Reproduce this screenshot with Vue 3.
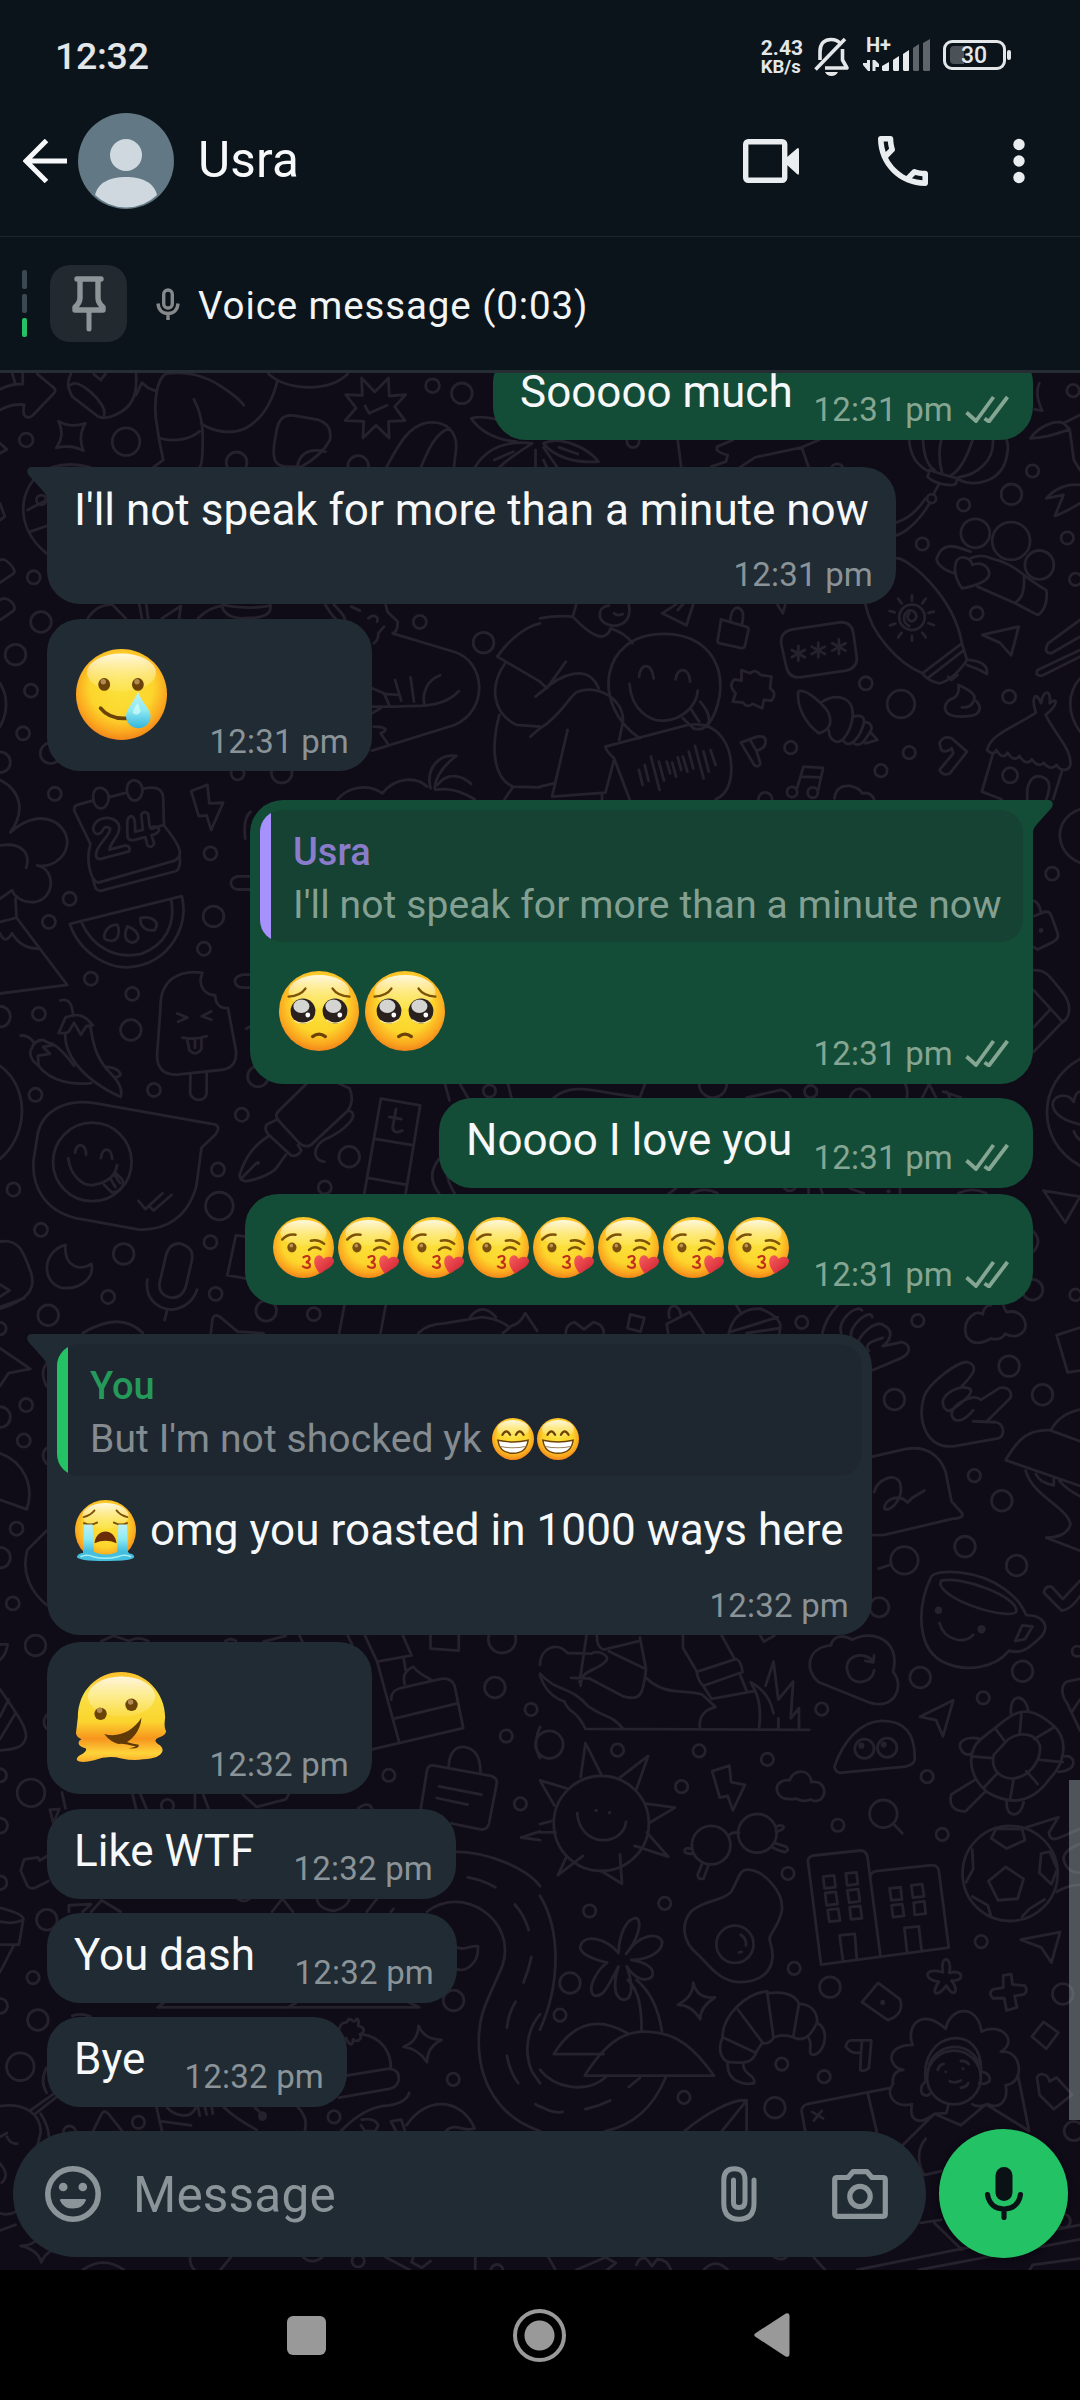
<script setup>
// Wallpaper tiles: origin and scale of each tile, rings [cx, cy, r], dots [cx, cy, r] and line art
const tiles = [
  {
    x: 0, y: 360, sx: 0.3444, sy: 0.3333,
    rings: [[76,240,20],[366,245,40],[687,307,30],[1256,77,20],[1341,100,30],[1040,318,30],[98,652,19],[119,786,30],[45,884,30],[90,992,19],[67,1120,19],[1219,786,19],[1404,848,30],[690,1240,19],[818,1238,30],[120,420,14],[0,1207,30],[147,1180,30]],
    dots: [],
    d: 'M0 150C20 138 45 132 70 134L68 150C66 172 84 178 96 165L158 98C162 92 160 86 155 82L108 42M0 88C20 76 40 72 66 72V42M36 42L44 70M206 42C190 70 200 90 210 110L285 170C300 176 320 172 334 165C380 145 400 110 395 42M205 75C220 60 245 80 262 95C290 120 308 150 302 165M272 42L292 60L306 42M395 105L412 68L430 84L450 92M480 42C455 60 448 120 452 170L462 240L474 300L445 322M480 42C540 30 600 50 640 78C670 98 698 120 708 136M563 118C590 170 590 220 588 270C588 300 586 310 580 322M462 234C500 246 545 242 580 214M584 190C620 216 670 224 710 206C760 180 790 130 806 60M780 42C830 90 950 100 1010 42M170 184Q205 205 248 190Q225 230 242 272Q205 252 163 264Q190 225 170 184ZM1050 54L1088 96L1128 54L1130 108L1178 104L1146 140L1176 182L1128 184L1130 234L1092 196L1054 234L1056 184L1002 182L1034 144L1004 104L1052 106ZM1060 138L1072 160L1124 136M800 230C806 180 820 160 860 168L925 180C955 190 962 215 958 240C940 275 910 300 875 320H830C800 318 786 300 800 230ZM862 322C870 285 890 262 945 275M1122 322C1150 270 1180 200 1240 188C1300 180 1325 220 1325 260L1318 322M1222 322C1240 280 1260 220 1305 205M1368 175C1400 165 1460 175 1510 212M1370 178C1400 220 1450 240 1500 245M1380 320C1410 270 1460 240 1545 250M1435 300L1490 275M1545 250C1500 280 1470 300 1450 322M1555 270V322M135 325C50 380 40 500 135 580M80 450L135 420M88 515L135 498M150 322Q205 305 262 322M0 600C15 590 50 630 40 640L0 668M0 720C20 705 50 735 40 752L0 780M0 250L20 268L0 280M0 430L14 470L0 480M255 775C275 745 295 735 325 733L365 775M405 735L412 775M425 735L430 775M470 775L525 738L520 775M575 775C600 750 625 740 645 738M645 738C650 770 690 778 720 774C760 775 790 765 785 735M645 735Q715 750 785 737M945 735C960 760 970 775 975 776M970 735C990 755 1000 770 1002 778M1020 740L1045 752M1070 775C1085 760 1100 770 1095 785M1120 735L1125 755L1155 785Q1155 815 1140 820L1320 876C1410 905 1420 1050 1320 1095L1080 1172M1085 850Q1100 840 1098 820L1115 800M1080 985L1115 1000L1130 1035M1147 960L1165 1022M1192 952L1202 1025M1278 946C1240 960 1225 1000 1232 1032M1115 1002L1155 1005M1080 1040H1150C1200 1035 1280 1050 1332 994M1080 1060L1105 1045M1085 1100C1120 1100 1130 1110 1105 1120L1125 1150M1568 790C1520 800 1470 850 1444 890L1568 965M1465 912C1420 980 1430 1060 1500 1095L1568 1100M1450 1065C1420 1180 1440 1260 1490 1280L1568 1282M1465 1318L1490 1280M980 1318C1010 1280 1070 1270 1110 1300C1150 1250 1210 1250 1240 1280M1250 1285C1235 1220 1280 1180 1325 1188C1290 1215 1265 1250 1262 1285M1270 1275C1300 1235 1340 1245 1368 1272M1265 1290C1310 1280 1350 1300 1378 1318M0 970C25 1010 22 1060 0 1100M1555 1010L1568 998M1540 1130L1568 1105'
  },
  {
    x: 540, y: 360, sx: 0.3444, sy: 0.3333,
    rings: [[1548,92,18],[1430,333,18],[1369,403,30],[1230,435,18],[1110,552,18],[1531,534,18],[1264,520,42],[1368,543,55],[1450,615,42],[1555,658,18],[1268,760,19],[1048,1032,40],[946,970,19],[1362,1010,19],[728,1163,18],[1072,1178,18],[990,1232,18],[1137,416,13],[270,244,18],[863,330,18],[1365,1246,22],[654,1318,20],[732,1296,15],[792,1298,15],[1080,772,37]],
    dots: [],
    d: 'M1072 240C1075 290 1100 320 1130 335L1125 350C1150 375 1200 380 1208 370L1212 355C1250 385 1340 370 1355 290Q1362 260 1355 240M1112 240C1115 300 1130 320 1145 330M1165 240C1155 280 1160 310 1168 342M1256 240C1240 290 1220 330 1195 345M1315 240C1320 300 1270 345 1215 352M1130 330Q1170 345 1212 355M1157 375L1142 403M1132 428C1110 470 1070 515 1035 526M1120 415C1090 460 1060 480 1035 487M1424 235C1450 195 1500 180 1520 190L1568 165M1424 235C1460 235 1490 225 1538 208L1520 190M1538 208L1550 300L1568 330M1470 415C1500 380 1540 370 1568 375M1470 415L1520 405L1495 468C1530 455 1550 440 1568 430M1205 640C1170 630 1150 610 1152 595C1170 540 1210 560 1250 575M1250 595Q1280 580 1310 595C1380 610 1400 650 1470 690C1475 720 1465 755 1445 765L1380 730L1270 680M1225 685C1195 640 1200 590 1230 592C1250 595 1255 610 1255 615C1290 600 1310 630 1302 650C1290 670 1250 680 1225 685ZM1405 650Q1410 710 1380 728M1035 595C1060 590 1200 700 1225 850L1110 940C1040 910 960 820 945 733M1225 850L1240 900Q1200 960 1160 970Q1130 965 1110 940M1232 870L1125 955M1245 900C1290 905 1300 920 1298 942Q1270 925 1240 915M1185 950L1195 960L1212 945M1072 760C1060 775 1075 790 1088 780C1100 765 1085 748 1070 752C1050 765 1055 790 1072 798M1080 706V722M1080 828V842M1015 753L1030 757M1143 755L1128 759M1016 796L1032 791M1144 796L1128 790M1040 716L1050 730M1120 716L1110 730M1040 832L1050 818M1120 832L1110 818M1284 825L1390 800L1368 886L1335 848ZM1568 780L1475 850Q1460 880 1485 880L1568 830M1568 870L1445 930Q1435 950 1460 946L1568 890M1215 975Q1270 1000 1260 1018C1290 1040 1275 1065 1250 1068C1200 1075 1175 1065 1176 1040Q1180 1020 1205 1012Q1218 1000 1215 975ZM1225 1042Q1250 1045 1258 1025M1440 1058C1380 1100 1310 1120 1298 1170C1310 1185 1322 1180 1325 1170C1335 1190 1350 1195 1358 1178C1370 1200 1385 1200 1392 1188C1405 1210 1420 1212 1428 1198C1440 1215 1455 1220 1462 1208C1475 1225 1490 1228 1500 1215C1510 1235 1535 1235 1540 1215C1545 1170 1500 1130 1468 1065M1440 1058C1425 1010 1440 990 1455 1030C1460 990 1485 985 1480 1030C1500 1010 1510 1030 1468 1065M1315 1182L1283 1295L1340 1318M1515 1235L1490 1318M1415 1318C1410 1260 1435 1245 1455 1250C1480 1258 1485 1275 1470 1318M1568 955C1530 1000 1530 1060 1568 1115M585 930L610 940Q625 925 640 945L672 950L668 985Q690 1000 672 1022L650 1020L645 1045L618 1032Q600 1045 590 1028L560 1025L568 1000Q545 975 565 958L585 962ZM733 808L870 787Q905 785 910 820L920 895Q920 925 888 932L755 952Q722 955 715 920L700 850Q698 815 733 808ZM750 858V902M731 870L769 892M769 870L731 892M808 848V892M789 860L827 882M827 860L789 882M868 838V882M849 850L887 872M887 850L849 872M525 778L598 800Q608 803 605 812L595 858Q592 866 582 864L522 850Q514 848 516 840L525 785ZM552 785C555 740 575 735 588 755Q592 770 586 795M355 760L395 733M355 760L425 796L445 733M400 750L415 733M690 735L705 760L712 735M0 775Q50 765 95 770L105 735M95 770C150 830 190 850 205 805M175 775C170 750 180 740 200 737M258 735C265 770 250 795 215 798Q180 795 173 768M215 760Q225 770 240 762M205 805Q250 820 268 850M290 1135C150 1040 170 822 360 822C530 822 560 990 485 1100M260 972C265 1050 320 1085 360 1082C410 1080 455 1040 458 992M415 1075L445 1105Q480 1115 490 1085Q495 1060 465 1025M440 1050L462 1085M288 950C290 910 325 905 330 955M394 958C398 920 432 920 436 965M190 1160L430 1095C520 1080 560 1160 555 1240Q550 1300 510 1318M190 1160Q190 1170 215 1195L260 1318M287 1230L298 1275M304 1215L315 1262M322 1190L347 1290M345 1205L360 1262M368 1205L378 1240M384 1208L395 1250M400 1192L410 1230M415 1190L428 1235M432 1175L445 1225M450 1158L475 1255M475 1175L490 1235M495 1170L510 1215M0 965L20 985L75 905M0 1000C60 940 140 910 170 985M0 1105C60 1070 90 1000 110 995C180 970 250 1030 240 1090L230 1140M80 1110L35 1310L190 1298L215 1200M0 1280L40 1270M180 1300V1318M750 995C770 980 830 1040 838 1060C850 1090 840 1110 810 1120C770 1090 745 1040 750 995ZM820 1025C860 1000 910 1010 908 1065C905 1110 880 1150 860 1145Q840 1140 838 1110M908 1070Q945 1060 940 1090C930 1130 905 1160 888 1150L878 1140M940 1085Q970 1090 960 1115L940 1145Q925 1160 912 1150M958 1115L980 1140L945 1150M583 1148L630 1130Q655 1125 655 1145Q655 1165 628 1172L640 1210Q635 1225 622 1215L583 1148M610 1140L628 1172M1160 1150Q1170 1125 1195 1135L1240 1175L1190 1240Q1170 1250 1160 1230L1200 1180L1195 1165Q1180 1180 1165 1170ZM745 1290L765 1220L822 1224L808 1290M758 1250L815 1252M855 1315Q860 1275 900 1278Q930 1285 935 1300Q960 1295 970 1318M400 240L410 322M170 305C140 265 60 225 10 250C40 290 100 310 170 305ZM55 262L110 282M10 262L50 322M10 300L20 322M560 240L515 260Q505 275 545 285L540 305L497 320M810 240L760 262L625 292L580 322M760 262L780 322M1450 70Q1435 100 1458 152L1436 148'
  },
  {
    x: 0, y: 780, sx: 0.3444, sy: 0.3444,
    rings: [[159,40,19],[611,213,19],[202,345,19],[142,412,19],[620,396,30],[592,490,19],[264,577,19],[384,621,19],[113,679,19],[380,726,30],[0,687,30],[447,900,19],[103,914,19],[702,972,19],[749,861,30],[1014,1094,30],[943,1183,19],[633,1131,19],[637,1237,40],[39,1189,19],[119,1306,19],[611,1342,19],[359,1376,30],[626,1492,19],[314,1501,19],[140,1554,30],[773,1541,30],[911,1551,19],[1421,903,18],[268,1109,114]],
    dots: [[749,1112,6]],
    d: 'M0 0C60 30 75 90 30 152C120 70 200 130 195 185C190 235 140 255 108 248C165 260 160 350 95 355C60 355 40 335 35 320L0 345M0 190C60 180 90 210 76 255M45 345L48 400L195 595L0 620M0 412L48 400M0 445Q15 480 35 445Q60 490 115 490M262 185L216 90Q213 75 225 72L268 60M318 50L362 38M418 25C460 15 475 30 474 60L476 130L440 142M262 188C250 230 260 290 285 298L505 235Q525 225 522 205Q515 180 476 132M270 290L278 315Q285 325 300 320L510 265Q525 258 522 225M282 24C305 18 320 40 314 62C305 90 280 88 272 62C268 42 272 30 282 24ZM382 2C405 -4 418 18 412 40C403 66 380 66 370 40C366 20 370 8 382 2ZM272 148C262 110 330 95 345 130C352 160 320 180 318 202L365 190Q380 192 375 207L290 230Q275 228 280 210C285 185 320 160 320 142C310 130 300 138 296 150Q280 165 272 148ZM370 165C370 130 365 110 380 105Q395 105 392 150L415 145L410 100Q420 88 430 98L435 138Q460 130 462 145Q460 155 440 160L448 185Q440 200 428 190L422 166L385 175Q372 175 370 165ZM555 32L602 14L608 68L648 66L613 145L600 103L577 105ZM712 170Q705 110 728 92M728 280H690Q670 285 670 300Q675 318 692 318H728M728 565H705Q682 570 682 585Q685 602 705 603H728M715 722L728 715M203 418L528 337C550 430 490 520 400 540C320 560 230 500 203 418ZM236 412C270 490 340 520 410 505C480 480 510 420 497 348M340 420C310 420 298 450 305 462Q330 475 342 455Q348 430 340 420ZM370 425C360 445 360 470 385 472C415 465 400 435 370 425ZM408 400C405 430 430 440 450 435C465 410 440 395 408 400ZM588 560C520 550 465 580 466 660L456 800C455 840 480 858 520 855L640 842C680 838 690 810 684 780L662 662C640 665 625 650 625 625C600 625 570 600 588 560M553 855L552 910C560 935 595 935 600 910V848M515 678L544 690L517 702M613 672L586 686L614 696M530 748Q565 755 600 744M543 752L550 785Q570 805 585 780L585 750M566 752V778M175 640Q210 630 212 685M170 735L190 690Q225 675 250 692L270 712L250 715L235 740L215 705L200 730L190 735ZM190 735C185 780 220 860 350 920C360 890 330 860 310 840C270 790 270 750 262 715M60 742Q85 740 100 765M92 780Q100 755 125 755L155 770L125 775L145 795L110 800L112 830C85 810 85 790 92 780M112 830C150 880 220 885 265 880M150 765C180 780 200 810 215 830M305 832Q345 835 350 855Q345 865 330 862M0 830C85 890 85 1030 0 1100M275 938L610 998C635 1000 640 1010 625 1030L585 1068L570 1180C545 1270 480 1310 400 1305L220 1272C130 1250 90 1180 98 1100L110 1025C125 960 190 925 275 938ZM218 1082C222 1050 250 1055 250 1088M293 1098C298 1065 322 1065 326 1100M198 1098C205 1150 240 1180 270 1176C310 1170 335 1150 340 1118M302 1175L325 1198C350 1195 365 1175 353 1158L335 1140M322 1160L335 1182M335 1150L348 1170M402 1222L422 1246L472 1200M438 1242L446 1250L498 1205M890 882L810 960Q795 975 810 990L870 1055Q890 1070 905 1058L1010 960Q1030 930 1015 895L985 882M800 988L775 1000Q765 1015 780 1030L845 1090Q865 1095 875 1075L865 1060M778 1035Q720 1070 696 1145Q695 1165 715 1165Q770 1155 800 1130L830 1088M700 1158L745 1112M1012 960C1050 970 1000 1020 940 1045C905 1070 910 1105 942 1108M1106 925L1220 945L1178 1200M1106 925L1058 1200M1088 1042L1198 1060M1068 1155L1178 1175M1150 955L1140 1010Q1145 1030 1168 1018M1130 978L1165 985M190 1350C120 1370 120 1460 180 1475C240 1480 275 1440 265 1405C240 1425 185 1420 190 1350ZM524 1346Q565 1358 557 1395L540 1470Q528 1506 495 1503Q460 1494 463 1462L482 1380Q492 1344 524 1346ZM428 1450C420 1500 450 1535 500 1538Q555 1530 572 1480M485 1540L478 1568M0 1340C60 1330 70 1380 90 1430C105 1480 80 1510 0 1535M0 1465L28 1482L0 1500M710 1325L685 1322L660 1438L715 1448M1292 882Q1300 910 1305 930M1335 882L1360 925M1475 882L1485 922M1275 1100Q1235 1150 1275 1200M1295 1130Q1300 1170 1320 1200'
  },
  {
    x: 540, y: 780, sx: 0.3444, sy: 0.3444,
    rings: [[1487,272,19],[786,905,18],[1430,1480,30],[1555,1495,17],[502,882,40]],
    dots: [[1455,437,7],[1012,1194,6]],
    d: 'M1568 85C1490 110 1490 210 1568 240M1432 350Q1450 355 1455 385M1435 395L1465 383Q1480 380 1485 395L1503 445Q1508 460 1490 470L1445 492L1433 485M1433 552C1470 550 1480 570 1520 620C1545 655 1540 690 1515 705L1433 790M1433 610L1515 700M1433 718L1480 668M1568 810C1440 880 1440 1050 1568 1120M1490 950C1480 920 1530 900 1550 935Q1555 905 1568 905M1490 950Q1500 985 1568 1000M1550 1020Q1555 1035 1568 1045M1462 1192L1568 1210L1525 1285ZM1432 1310Q1460 1340 1432 1370M40 922C80 890 130 895 180 905Q240 915 290 922L305 882M600 922L700 900Q720 905 728 922M900 922Q910 895 930 897Q955 905 958 922M1060 882Q1070 900 1065 922M1110 922L1130 882L1150 922M1170 905L1222 922M1180 905L1190 922M375 1200L395 1186M440 1200Q480 1180 515 1200M710 1186Q725 1200 740 1186M780 1186V1200M815 1186L820 1200M900 1186L940 1200M1045 1186V1200M1215 1200Q1255 1180 1295 1200'
  },
  {
    x: 0, y: 1300, sx: 0.3444, sy: 0.3444,
    rings: [[0,83,18],[76,305,19],[0,340,30],[69,408,19],[48,664,19],[0,748,30],[37,881,19],[103,1003,30],[0,1380,19],[90,1431,40],[0,1526,22],[486,1468,18],[1129,1380,18],[1437,1125,30],[1542,1189,18],[1470,1266,18],[1511,1463,18],[1458,985,40]],
    dots: [],
    d: 'M0 140L88 200L25 212L0 250M0 580L78 608C100 540 70 470 0 445M135 670L80 725C60 790 90 850 135 885M0 1130C40 1190 80 1240 75 1270C70 1300 40 1305 0 1308M25 1160L0 1210M45 1200L0 1275M0 1000L22 1000Q18 1030 0 1045M135 185Q115 210 135 250M135 430Q115 450 135 475M135 1205Q120 1225 135 1245M0 20L70 -5M240 96Q350 30 415 96M612 96L617 55Q622 38 640 50L690 92L765 96M1000 15L985 96M1120 15L1105 96M1215 96Q1240 70 1290 68L1400 50Q1450 55 1480 80L1460 96M1365 50Q1400 5 1440 50M1485 75Q1510 70 1525 38L1560 90M295 990L330 975L375 990Q400 975 430 990M655 990Q670 980 685 990M765 992L830 975M870 975L878 992M1010 975L1022 1000M1060 975L1095 1050L1195 1032L1170 975M1095 1050L1158 1280M1080 1305L1345 1243L1320 1120Q1310 1095 1280 1100L1160 1128Q1135 1135 1136 1160M1148 1215L1325 1172M1172 1040L1178 1075M1175 1115Q1165 1080 1200 1065Q1210 1080 1250 1102M1250 975V1012L1332 1018V975M1222 1476L1240 1365Q1243 1348 1262 1352L1425 1382Q1446 1388 1442 1405L1420 1520Q1415 1540 1395 1537L1310 1520M1303 1352C1305 1310 1325 1296 1350 1298Q1395 1305 1395 1372M1275 1412L1398 1436M1268 1446L1358 1465M1568 1240Q1545 1290 1568 1330M180 1430L190 1476M385 1436L395 1476M408 1436L425 1476M566 1436V1476M590 1436L605 1476M705 1436L745 1472L830 1450L838 1436M1040 1476Q1070 1455 1080 1476M145 1480L172 1478L155 1520Z'
  },
  {
    x: 540, y: 1300, sx: 0.3444, sy: 0.3444,
    rings: [[760,65,18],[1097,60,18],[1362,192,30],[1029,289,30],[1459,275,30],[1261,510,18],[1341,583,30],[1234,716,30],[1384,771,30],[1058,756,40],[985,892,28],[1104,1096,30],[1401,1078,30],[1287,1155,18],[818,1188,18],[27,1291,40],[225,1307,18],[462,1309,18],[660,1334,18],[411,1413,18],[1124,1384,18],[942,1303,28],[1008,1300,28],[1560,1020,15],[178,1520,138]],
    dots: [[1157,901,11],[1282,956,12],[933,1294,9],[998,1291,9],[163,1482,5],[202,1489,5]],
    d: 'M75 96Q75 70 100 64L128 85L155 64Q185 70 185 96M262 42L303 52L292 92L254 82ZM372 96L368 70L435 35L475 96M376 52C365 15 400 0 410 45M548 96Q560 50 585 40L570 15M585 40Q600 25 640 25Q700 50 698 80L695 96M555 92L690 50M600 96L695 82M820 96Q830 50 865 15M875 96C860 60 920 10 935 30M905 110C890 80 960 20 965 50M925 130C915 110 980 50 1000 75C1030 90 1015 120 995 134L1050 122C1080 130 1075 155 1050 168L965 204M955 148C940 130 960 120 995 110M1310 112Q1260 140 1238 105Q1225 60 1265 38Q1280 36 1285 42Q1290 15 1310 15M1345 15Q1350 30 1355 35C1400 25 1420 70 1405 90Q1385 115 1350 98Q1340 118 1310 112M1115 280C1130 240 1210 180 1240 180C1275 190 1260 215 1225 250M1115 280C1095 350 1120 430 1200 425L1330 402C1350 395 1350 362 1325 355L1258 352M1170 300C1165 270 1230 240 1250 260C1260 275 1200 320 1185 322Q1170 315 1170 300ZM1195 330C1200 300 1260 270 1280 290L1335 255C1370 250 1370 280 1365 285L1300 350M1195 330C1200 360 1230 355 1258 320M1568 80L1500 102L1532 210L1568 205M1352 465C1390 400 1420 375 1480 378L1568 410M1352 465L1568 540M1485 375Q1510 330 1568 318M1410 495C1430 570 1530 600 1540 650C1535 680 1500 690 1470 690L1568 728M1440 505Q1450 530 1492 538V520M1508 525Q1530 550 1568 570M965 455L1060 433C1130 420 1165 460 1178 500L1195 585L1225 618C1232 630 1215 635 1200 635L1000 682L965 683M970 558C980 520 1030 500 1045 530C1060 580 1010 620 1000 605C1000 580 1040 560 1068 588L1080 575L1116 553M983 780L1020 768M1135 805C1145 780 1270 780 1350 840C1390 870 1400 890 1412 915C1460 915 1480 945 1458 975C1420 1010 1400 1030 1362 1018C1320 1070 1240 1080 1180 1055C1090 1020 1095 890 1135 805ZM1165 815C1220 800 1390 860 1383 905C1370 930 1180 880 1162 825ZM1400 945L1430 948L1408 985L1380 990ZM1160 938C1175 990 1235 1000 1258 972M1568 815L1518 868L1485 832Q1465 830 1463 850L1515 902Q1540 900 1568 860M845 1003C850 975 880 970 907 987C960 955 1050 985 1025 1080C1060 1120 1030 1190 960 1170L810 1110C770 1080 770 1010 845 1003ZM970 1075C965 1110 920 1120 900 1095C870 1050 920 1010 965 1045M970 1032L968 1052L945 1048M0 1060C0 1010 50 990 80 1025L150 1027C160 1015 210 1030 190 1050C160 1080 120 1070 118 1120M135 975L115 1110M90 1097L145 1099M145 1100L240 1150C300 1170 300 1130 308 1072L200 1020M308 1072L290 980M165 975Q165 1010 185 1015L290 990M0 1085C50 1140 90 1120 140 1180C200 1220 200 1200 240 1243M0 1090Q20 1150 70 1165C90 1210 100 1180 132 1245L782 1248M308 1097C360 1150 420 1130 470 1145L510 1182C470 1190 460 1220 465 1243M415 975V1010L455 1078M455 1080L570 1042Q585 1050 588 1080L475 1120Q460 1110 455 1080ZM528 975L565 1042M475 1122L498 1158L625 1135M582 1090L600 1135M678 1200C670 1160 650 1130 612 1110L625 1135Q645 1180 636 1243M655 1120L678 1050L692 1160L735 1108L728 1215L752 1185V1243M692 1215V1243M640 975L650 992L680 975M855 1355C880 1280 930 1225 990 1222C1060 1220 1090 1260 1088 1335Q1085 1350 1060 1355L870 1373Q858 1370 855 1355ZM1103 1210L1200 1162L1170 1267L1150 1220ZM1350 1220C1400 1180 1440 1190 1490 1235C1540 1280 1520 1350 1480 1390C1430 1460 1370 1470 1300 1430C1240 1380 1240 1310 1280 1275ZM1360 1275C1400 1250 1440 1260 1452 1295C1455 1340 1420 1385 1370 1390C1320 1385 1310 1350 1318 1320ZM1398 1200L1393 1258M1325 1248L1350 1282M1490 1242L1435 1275M1252 1325L1314 1330M1452 1335L1518 1342M1290 1415L1330 1372M1375 1392L1365 1450M1412 1368L1445 1405M1368 1205C1360 1140 1410 1140 1418 1195M1280 1275C1240 1265 1215 1280 1220 1300Q1230 1325 1252 1318M1522 1325C1560 1320 1560 1370 1505 1370M1265 1392L1195 1435C1185 1465 1200 1485 1235 1485L1290 1430M1355 1455C1350 1505 1400 1510 1405 1450M1568 1100L1530 1108C1510 1120 1515 1150 1530 1170L1568 1250M1545 1195L1568 1160M500 1368L550 1352L555 1400L595 1408L560 1482L545 1440L522 1445ZM690 1430C680 1405 705 1390 725 1395C735 1360 785 1360 788 1400C825 1395 835 1430 815 1450Q800 1460 785 1450Q765 1460 745 1448Q700 1455 690 1430ZM118 1385L132 1287L180 1382M230 1388L314 1324L280 1420M308 1462L392 1474L318 1518M310 1546L372 1616L275 1585M232 1610L238 1695L178 1658M125 1614L52 1670L78 1615M78 1418L0 1395L42 1468M0 1522L38 1512M45 1546L0 1546M108 1490C115 1590 240 1590 250 1515'
  },
  {
    x: 0, y: 1800, sx: 0.3444, sy: 0.3827,
    rings: [[0,216,20],[136,313,30],[96,464,18],[0,538,22],[110,575,30],[59,697,40],[1317,524,30],[1316,730,18],[970,828,18],[402,842,18],[202,868,18],[1040,1204,18],[1443,1230,18]],
    dots: [[762,826,13]],
    d: 'M140 145L115 158L110 150L70 155L60 185L80 225Q90 235 105 228L140 212M0 282Q60 295 68 310L55 378H0M0 318Q40 325 62 315M40 380L0 450M200 292V275L265 272L240 292M265 292L295 262L350 292M790 292L820 258L850 292M920 258Q925 285 970 290Q1010 280 1015 258M1065 292L1095 258M1135 292L1142 285M690 258Q708 270 725 258M1240 292C1340 220 1500 310 1460 430C1420 520 1390 550 1390 630C1390 740 1450 830 1568 865M1300 135C1430 130 1540 190 1568 225M1568 560C1530 600 1520 660 1545 710L1568 740M1358 202Q1400 208 1438 228M1495 273Q1525 305 1535 340M1543 410Q1535 445 1520 477M1497 527Q1475 560 1472 595M1472 668Q1480 710 1505 740M1555 795L1568 802M1325 385C1350 395 1360 380 1388 382C1390 430 1350 450 1325 442M475 530L458 542H1218L1190 530M835 542L860 530M210 564Q235 555 262 566M985 600C990 570 1010 590 1010 575C1020 565 1028 590 1035 572C1045 570 1040 590 1040 590C1065 595 1055 610 1045 612C1055 625 1035 635 1025 625C1025 650 1010 635 1005 622M1050 612C1110 620 1135 660 1135 700M1005 720L1130 702Q1160 705 1158 730Q1155 750 1130 755L985 778M1215 590Q1230 625 1282 627Q1240 645 1240 685Q1215 650 1172 645Q1215 630 1215 590ZM1513 98L1568 82M1513 98L1568 105M0 800C70 790 120 820 118 870L108 905M135 700Q115 735 135 765M118 820Q140 850 142 880M90 810L160 765M105 818L175 768M0 880L20 870M20 880Q30 900 50 898M270 865L295 820Q303 808 315 820L355 865M455 803Q460 830 470 862M485 803C500 820 550 840 568 805M470 840L555 850M575 803L580 825M595 803L600 822M615 803L618 820M650 803Q680 830 745 862M740 803L770 830M865 803Q895 830 885 865M990 865Q1060 800 1130 798Q1180 790 1188 765M1050 835Q1090 830 1098 850L1090 865H1060L1048 850M1150 865L1135 840L1165 835L1175 862M1180 850C1240 770 1340 780 1378 858C1350 870 1320 840 1295 865M60 1165Q95 1165 108 1145M60 1165Q110 1175 120 1208Q128 1190 145 1180M0 1080Q40 1090 65 1060M0 1125L45 1110M0 950Q30 980 5 1000M240 1228Q300 1190 360 1228M552 1195Q550 1215 565 1228M640 1228L670 1195M880 1195Q905 1215 935 1195M1120 1195L1190 1228M1200 1195L1195 1208L1225 1222L1250 1205M1380 1195V1228'
  },
  {
    x: 540, y: 1800, sx: 0.3444, sy: 0.3827,
    rings: [[865,66,18],[1168,90,18],[720,192,18],[144,290,18],[362,270,18],[87,478,30],[58,562,18],[738,440,18],[842,489,30],[702,690,18],[825,723,18],[1281,370,18],[1518,507,30],[418,777,18],[682,804,30],[1550,865,28],[1520,1100,20],[497,118,56],[631,87,56],[997,36,40],[566,377,54],[1365,192,138],[1202,725,78]],
    dots: [[995,529,7],[1178,710,4],[1228,702,4]],
    d: 'M548 92Q560 82 578 86M685 70Q705 62 708 72Q700 82 685 82M680 112L715 122Q725 132 712 136Q690 132 675 124M442 128Q418 122 420 135Q425 142 445 140M470 168L458 195Q458 210 475 205L490 168M1026 62L1052 87M555 240C580 200 580 180 605 182C650 185 710 240 702 290C690 340 660 350 668 370C690 430 660 475 580 476C520 475 490 430 460 405C410 370 410 320 440 290C480 260 530 265 555 240ZM583 352Q600 362 598 380M578 398L586 397M816 430L778 160Q778 148 795 145L930 132Q948 132 951 150L988 404M816 430L1187 386L1158 185Q1155 170 1138 170L975 186Q960 190 960 200M880 422L870 354L914 350L920 417M1066 398L1058 334L1100 330L1108 393M1352 175L1404 206L1387 258L1330 262L1302 212ZM1310 100L1325 75L1400 76L1408 105L1355 127ZM1455 140L1480 135L1502 180L1485 220L1450 190ZM1237 215L1258 180L1255 130M1255 252L1300 275L1310 305M1400 305L1420 285L1465 260M1410 72L1505 45L1478 85Q1480 110 1510 98L1568 75M1500 240Q1540 220 1568 222M1568 115Q1520 130 1520 155Q1530 190 1568 190M228 400C230 350 250 310 280 308C300 320 280 370 250 402C290 350 340 345 355 370C355 400 310 418 265 418C310 425 335 440 325 462C300 480 270 460 252 435C270 480 270 520 245 522C210 520 215 470 228 435C200 480 185 520 155 510C135 490 170 440 195 425C150 415 110 400 118 380C130 350 190 360 228 400M255 470C290 500 295 550 295 605M280 470C320 500 345 550 354 605M40 664C90 590 160 560 255 610M40 664H185M130 720C200 620 260 600 320 606C400 610 450 650 505 720ZM445 477Q455 520 508 516Q465 540 465 573Q440 535 400 535Q445 515 445 477ZM660 500C600 505 530 560 530 620C515 650 525 680 550 685C610 690 620 680 630 655L645 635Q665 640 680 620C700 612 720 615 735 620C770 635 790 610 805 580C805 555 790 535 752 532C740 505 700 500 660 505L678 620M752 532L735 620M575 548L648 636M535 622L625 660M805 582C840 600 830 650 800 665C770 670 795 640 780 622M545 685C540 740 600 745 622 740C625 715 590 720 590 688M982 478L1045 520Q1060 560 1010 575L935 528ZM1170 450C1160 400 1200 410 1188 452C1230 440 1235 475 1195 472C1220 500 1200 520 1180 485C1150 520 1135 505 1158 475C1110 470 1115 435 1170 450M1345 458L1368 455L1372 482L1408 485Q1418 500 1405 508L1378 512L1385 542L1355 550L1348 518L1315 518Q1300 505 1315 495L1345 490ZM1462 580L1505 608L1470 650L1428 618ZM888 645Q890 628 905 628L962 628L955 700Q940 712 930 705L932 660Q905 665 888 645ZM932 660L935 630M1080 795C1030 805 1000 770 1025 742C1020 715 1040 705 1055 705C1010 700 1000 640 1082 640C1060 590 1110 540 1178 598C1190 540 1270 530 1282 605C1340 580 1390 630 1338 658C1400 650 1410 740 1352 745C1360 780 1340 810 1300 795Q1270 805 1255 795M1080 795Q1070 840 1110 838L1140 825M1120 735C1100 600 1290 580 1280 710M1130 690C1160 630 1250 630 1275 690M1120 735Q1100 750 1110 768Q1125 778 1135 765M1282 710Q1310 715 1305 735Q1290 745 1275 740M1155 705Q1160 690 1172 690M1222 682Q1235 680 1245 690M1190 735Q1205 742 1222 733M1222 752Q1240 750 1243 740M1050 905L1145 820L1222 850L1295 795L1420 865L1388 720M1185 800L1180 818L1145 820M1120 885C1095 910 1095 950 1115 980L1165 970M770 865L760 815Q758 800 775 795L1018 752M952 768L978 868M790 815L822 832M818 812L795 838M420 865C480 820 560 780 600 785V865M528 865L600 785M1445 735C1435 715 1470 705 1480 735L1500 725L1545 770L1492 808L1450 770ZM1396 365L1510 345L1485 425L1455 385ZM1105 1105L1165 1097M1145 1105L1225 1175M920 1228L1568 1110M1100 1228L1568 1148M1422 1228L1430 1215L1568 1198M0 600C60 480 60 340 0 250M0 705C40 750 130 770 190 725M0 800Q40 820 66 815M132 808Q170 800 204 785M258 750L290 726M190 865C270 850 330 800 365 725M25 1195L45 1228M105 1228L190 1195L220 1210L195 1228M280 1215Q290 1190 310 1200L325 1218L340 1200Q370 1200 380 1228M475 1228Q510 1195 545 1228M795 1195L828 1228M680 1195Q700 1205 715 1195M822 200L854 197L858 228L826 231ZM888 192L919 189L923 220L892 223ZM828 243L859 240L864 272L832 275ZM892 236L924 233L929 265L898 268ZM835 287L866 284L871 315L840 318ZM899 280L930 277L935 309L903 312ZM1015 231L1047 228L1051 260L1020 262ZM1078 223L1110 220L1115 252L1083 255ZM1021 275L1052 272L1057 303L1025 306ZM1085 268L1116 265L1120 297L1088 300Z'
  }
]

const messages = [
  { id: 1, out: true, kind: 'inline', text: 'Sooooo much', time: '12:31 pm' },
  { id: 2, tail: true, kind: 'stack', text: "I'll not speak for more than a minute now", time: '12:31 pm' },
  { id: 3, kind: 'emoji', emojis: ['tear'], label: '🥲', time: '12:31 pm' },
  { id: 4, out: true, tail: true, kind: 'emoji', quote: { name: 'Usra', text: "I'll not speak for more than a minute now", emojis: [] }, emojis: ['plead', 'plead'], label: '🥺🥺', time: '12:31 pm' },
  { id: 5, out: true, kind: 'inline', text: 'Noooo I love you', time: '12:31 pm' },
  { id: 6, out: true, kind: 'emoji', emojis: Array(8).fill('kiss'), label: '😘😘😘😘😘😘😘😘', time: '12:31 pm' },
  { id: 7, tail: true, kind: 'stack', quote: { name: 'You', text: "But I'm not shocked yk", emojis: ['grin', 'grin'] }, emojis: ['sob'], label: '😭', text: 'omg you roasted in 1000 ways here', time: '12:32 pm' },
  { id: 8, kind: 'emoji', emojis: ['melt'], label: '🫠', time: '12:32 pm' },
  { id: 9, kind: 'inline', text: 'Like WTF', time: '12:32 pm' },
  { id: 10, kind: 'inline', text: 'You dash', time: '12:32 pm' },
  { id: 11, kind: 'inline', text: 'Bye', time: '12:32 pm' }
]
</script>

<template>
  <div class="phone">
    <svg class="defs" width="0" height="0" aria-hidden="true">
      <defs>
        <radialGradient id="skin" cx=".5" cy=".42" r=".58">
          <stop offset="0" stop-color="#fbe23c" />
          <stop offset=".6" stop-color="#fcd52c" />
          <stop offset=".85" stop-color="#fba81f" />
          <stop offset="1" stop-color="#f2861b" />
        </radialGradient>
        <linearGradient id="shine" x1="0" y1="0" x2="0" y2="1">
          <stop offset="0" stop-color="#fff" stop-opacity=".85" />
          <stop offset="1" stop-color="#fff3a8" stop-opacity=".15" />
        </linearGradient>
        <linearGradient id="water" x1="0" y1="0" x2="0" y2="1">
          <stop offset="0" stop-color="#bdf2f5" />
          <stop offset=".5" stop-color="#8eeaf2" />
          <stop offset="1" stop-color="#35b6dc" />
        </linearGradient>
        <linearGradient id="melted" x1="0" y1="0" x2="0" y2="1">
          <stop offset="0" stop-color="#fbc02c" />
          <stop offset=".25" stop-color="#fadf45" />
          <stop offset=".55" stop-color="#fbd52f" />
          <stop offset=".74" stop-color="#f7951e" />
          <stop offset=".9" stop-color="#fed53a" />
          <stop offset="1" stop-color="#f9a92a" />
        </linearGradient>
        <linearGradient id="heart" x1="0" y1="0" x2="1" y2="1">
          <stop offset="0" stop-color="#f6605c" />
          <stop offset="1" stop-color="#cf1c30" />
        </linearGradient>
        <g id="head">
          <circle cx="50" cy="50" r="50" fill="url(#skin)" />
          <ellipse cx="50" cy="26" rx="38" ry="21" fill="url(#shine)" />
        </g>
        <symbol id="tear" viewBox="0 0 100 100">
          <use href="#head" />
          <ellipse cx="31" cy="39" rx="6.5" ry="7" fill="#6b4208" /><circle cx="30" cy="36" r="3" fill="#b08a50" />
          <ellipse cx="68" cy="39" rx="6.5" ry="7" fill="#6b4208" /><circle cx="67" cy="36" r="3" fill="#b08a50" />
          <path d="M27 65Q37 78 58 76" fill="none" stroke="#6b4208" stroke-width="4" stroke-linecap="round" />
          <path d="M68 47C63 60 55 66 55 74A13 12.500 0 0 0 82 74C82 66 73 60 68 47Z" fill="url(#water)" />
          <path d="M62 70Q65 62 68 59L71 68Q68 75 62 70Z" fill="#d5fbfa" opacity=".7" />
        </symbol>
        <symbol id="plead" viewBox="0 0 100 100">
          <use href="#head" />
          <path d="M12 32Q27 31 33 22M88 32Q73 31 67 22" fill="none" stroke="#7c5208" stroke-width="3" stroke-linecap="round" />
          <circle cx="30" cy="50" r="15.500" fill="#2a211e" /><circle cx="70" cy="50" r="15.500" fill="#2a211e" />
          <ellipse cx="28" cy="44" rx="10" ry="8.500" fill="#d4d4d2" /><ellipse cx="68" cy="44" rx="10" ry="8.500" fill="#d4d4d2" />
          <circle cx="36" cy="55" r="3" fill="#fff" /><circle cx="76" cy="55" r="3" fill="#fff" />
          <path d="M19 62Q30 69 42 61M59 61Q70 69 82 61" fill="none" stroke="#fff2b0" stroke-width="1.500" />
          <path d="M42 82Q50 76 58 82" fill="none" stroke="#6b4208" stroke-width="4" stroke-linecap="round" />
        </symbol>
        <symbol id="kiss" viewBox="0 0 100 100">
          <use href="#head" />
          <path d="M15 37Q24 27 37 29M62 39Q74 36 84 44" fill="none" stroke="#7c5208" stroke-width="4" stroke-linecap="round" />
          <ellipse cx="31" cy="50" rx="7.500" ry="8" fill="#7a5010" /><circle cx="30" cy="47" r="3" fill="#b9924c" />
          <path d="M59 54Q68 46 78 53" fill="none" stroke="#7c5208" stroke-width="4" stroke-linecap="round" />
          <path d="M50 66Q59 61 60 68Q59 73 54 74Q63 76 60 82Q55 85 49 81" fill="none" stroke="#c0301a" stroke-width="3.500" stroke-linecap="round" />
          <path d="M77 93C67 82 66 73 69 67C73 60 80 62 83 69C88 63 98 64 100 71C101 80 89 85 77 93Z" fill="url(#heart)" />
        </symbol>
        <symbol id="sob" viewBox="0 0 100 100">
          <use href="#head" />
          <path d="M14 28Q26 25 32 17M86 28Q74 25 68 17" fill="none" stroke="#7c5208" stroke-width="3" stroke-linecap="round" />
          <path d="M15 38Q25 43 36 37M85 38Q75 43 64 37" fill="none" stroke="#7c5208" stroke-width="3.500" stroke-linecap="round" />
          <path d="M32 71C34 45 66 45 68 71Q50 63 32 71Z" fill="#6b2d08" />
          <path d="M15 40H29L31 88H13ZM85 40H71L69 88H87Z" fill="url(#water)" />
          <path d="M3 93Q6 87 13 87Q14 84 22 86Q30 83 35 87Q44 90 50 89Q58 90 65 87Q72 83 79 86Q88 84 90 88Q97 88 97 94Q95 100 50 100Q4 100 3 93Z" fill="#45bfdf" />
          <path d="M9 93Q20 88 30 93Q50 98 70 93Q82 88 92 93" fill="none" stroke="#a6eef3" stroke-width="2.500" />
        </symbol>
        <symbol id="grin" viewBox="0 0 100 100">
          <use href="#head" />
          <path d="M25 40Q34 24 43 40M57 40Q66 24 75 40" fill="none" stroke="#6b4208" stroke-width="5.500" stroke-linecap="round" />
          <path d="M14 53Q50 61 86 53Q82 84 50 84Q18 84 14 53Z" fill="#fff" stroke="#6b4208" stroke-width="3.500" />
          <path d="M18 67Q50 75 82 67" fill="none" stroke="#9a835c" stroke-width="2.500" />
        </symbol>
        <symbol id="melt" viewBox="0 0 100 100">
          <path d="M2 50C2 20 24 0 50 0S98 22 98 50C97 58 97 61 99 65Q99 69 91 72Q84 75 90 79Q96 82 95 87Q92 95 74 96Q63 98 50 95Q35 91 20 97Q5 101 1 97Q0 93 7 90Q12 87 11 84Q4 82 3 79Q2 76 6 74Q0 71 0 67Z" fill="url(#melted)" />
          <ellipse cx="50" cy="27" rx="37" ry="22" fill="url(#shine)" />
          <circle cx="27" cy="46" r="6.800" fill="#6b4208" /><circle cx="26" cy="42" r="3" fill="#b08a50" />
          <circle cx="61" cy="36" r="6.800" fill="#6b4208" /><circle cx="60" cy="33" r="3" fill="#b08a50" />
          <path d="M31 68C47 73 64 64 72 50C71 66 60 75 56 77Q61 79 69 80Q70 85 58 84L66 82Q52 78 47 79Q38 77 31 68Z" fill="#5f3a08" />
        </symbol>
      </defs>
    </svg>

    <header class="status">
      <span class="clock">12:32</span>
      <span class="speed"><span>2.43</span><span>KB/s</span></span>
      <svg class="bell" viewBox="0 0 36 40" width="36" height="40">
        <path d="M6 23V15C6 6 11 2.500 17 2.500C22 2.500 25 4.500 27 7M28.500 12V23L33 31H11" fill="none" stroke="#e4e7e9" stroke-width="3.600" stroke-linejoin="round" />
        <path d="M1.500 32.500L31 2" stroke="#e4e7e9" stroke-width="3.600" />
        <path d="M11 35H24Q22 39 17.500 39T11 35Z" fill="#e4e7e9" />
      </svg>
      <span class="network">
        <svg viewBox="0 0 68 36" width="68" height="36">
          <path d="M4 24H7V35H5L0 29V27H4ZM9.500 24H12L16 28V31H12.500V35H9.500Z" fill="#e4e7e9" />
          <path d="M19 34V30L26 26V34Q26 35 25 35H20ZM30 34V24L36 20V34Q36 35 35 35H31ZM40 34V18L46 14V34Q46 35 45 35H41Z" fill="#e9ecee" />
          <path d="M50 34V12L56 8V34Q56 35 55 35H51ZM60 34V7L67 3V34Q67 35 66 35H61Z" fill="#606569" />
        </svg>
        <span class="hplus">H+</span>
      </span>
      <span class="battery"><span class="cell"><i class="charge" /><b>30</b></span><i class="nub" /></span>
    </header>

    <nav class="topbar">
      <svg class="back" viewBox="0 0 44 44" width="44" height="44"><path d="M23.500 1.500L3 22L23.500 42.500M3 22H44" fill="none" stroke="#f7f8fa" stroke-width="5" /></svg>
      <svg class="avatar" viewBox="0 0 96 96" width="96" height="96">
        <circle cx="48" cy="48" r="48" fill="#627884" />
        <circle cx="48" cy="42" r="16" fill="#cfd8df" />
        <path d="M17 82C20 69 33 64 48 64S76 69 79 82Q66 94.500 48 94.500T17 82Z" fill="#cfd8df" />
      </svg>
      <h1>Usra</h1>
      <svg class="video" viewBox="0 0 56 44" width="56" height="44"><rect x="2.700" y="2.700" width="39" height="38.600" rx="2.500" fill="none" stroke="#e9edef" stroke-width="5.400" /><path d="M43 19L54 9.500Q56 8 56 11V34Q56 37 54 35L43 25Z" fill="#e9edef" /></svg>
      <svg class="call" viewBox="3 3 18 18" width="50" height="50"><path d="M6.540 5c.06.89.21 1.760.45 2.590l-1.200 1.200c-.41-1.200-.67-2.470-.76-3.790h1.510m9.860 12.020c.85.240 1.720.390 2.600.45v1.490c-1.320-.09-2.590-.35-3.800-.75l1.200-1.190M7.500 3H4c-.55 0-1 .45-1 1 0 9.390 7.610 17 17 17 .55 0 1-.45 1-1v-3.490c0-.55-.45-1-1-1-1.240 0-2.450-.2-3.570-.57-.1-.04-.21-.05-.31-.05-.26 0-.51.1-.71.290l-2.200 2.200c-2.830-1.450-5.150-3.760-6.590-6.590l2.200-2.200c.28-.28.36-.67.25-1.020C8.700 6.450 8.500 5.250 8.500 4c0-.55-.45-1-1-1z" fill="#e9edef" /></svg>
      <svg class="more" viewBox="0 0 12 46" width="12" height="46"><circle cx="6" cy="6.500" r="5.700" fill="#e9edef" /><circle cx="6" cy="23" r="5.700" fill="#e9edef" /><circle cx="6" cy="39.500" r="5.700" fill="#e9edef" /></svg>
    </nav>

    <section class="pinned">
      <div class="steps"><i /><i /><i class="on" /></div>
      <div class="pinbox">
        <svg viewBox="0 0 34 56" width="34" height="56"><path d="M5 3H29M8 3V22Q8 27 3 31V34H31V31Q26 27 26 22V3" fill="none" stroke="#8d9598" stroke-width="5.400" stroke-linecap="round" stroke-linejoin="round" /><path d="M17 35V53" stroke="#8d9598" stroke-width="5" stroke-linecap="round" /></svg>
      </div>
      <svg class="minimic" viewBox="0 0 24 33" width="24" height="33"><rect x="7.700" y="2" width="8.600" height="18" rx="4.300" fill="none" stroke="#85898b" stroke-width="3.400" /><path d="M2 15.500C2.500 22 6.500 25.500 12 25.500S21.500 22 22 15.500M12 25.500V32" fill="none" stroke="#85898b" stroke-width="3.400" /></svg>
      <span class="pintext">Voice message (0:03)</span>
    </section>

    <main class="chat">
      <svg class="wallpaper" viewBox="0 373 1080 1897" width="1080" height="1897" aria-hidden="true">
        <g v-for="(t, i) in tiles" :key="i" :transform="`translate(${t.x} ${t.y}) scale(${t.sx} ${t.sy})`">
          <path :d="t.d" class="line" />
          <ellipse v-for="(c, j) in t.rings" :key="'r' + j" :cx="c[0]" :cy="c[1]" :rx="c[2]" :ry="c[2] * 0.3444 / t.sy" class="line" />
          <circle v-for="(c, j) in t.dots" :key="'d' + j" :cx="c[0]" :cy="c[1]" :r="c[2]" class="dot" />
        </g>
      </svg>

      <div class="messages">
        <article v-for="m in messages" :key="m.id" class="bubble" :class="[m.out ? 'out' : 'in', m.kind, 'm' + m.id, { tailed: m.tail }]">
          <svg v-if="m.tail" class="tail" viewBox="0 0 20 31" width="20" height="31"><path d="M20 0H5C0 0 -1 4 1.500 8L15 23Q19 27 20 31Z" /></svg>
          <div v-if="m.quote" class="quote" :class="{ mine: m.quote.name === 'You' }">
            <b>{{ m.quote.name }}</b>
            <p><span>{{ m.quote.text }}</span><svg v-for="(e, k) in m.quote.emojis" :key="k" class="smallmoji" viewBox="0 0 100 100"><use :href="'#' + e" /></svg></p>
          </div>
          <div class="body">
            <div class="content">
              <span v-if="m.emojis" class="emojis" role="img" :aria-label="m.label">
                <svg v-for="(e, k) in m.emojis" :key="k" class="emoji" viewBox="0 0 100 100"><use :href="'#' + e" /></svg>
              </span>
              <span v-if="m.text" class="text">{{ m.text }}</span>
            </div>
            <div class="meta">
              <time>{{ m.time }}</time>
              <svg v-if="m.out" class="ticks" viewBox="0 0 44 28" width="44" height="28"><path d="M1.500 17.500L11 26L28.500 2M19.500 23.500L24 26.500L42.500 2" fill="none" stroke="#86a694" stroke-width="3.800" /></svg>
            </div>
          </div>
        </article>
      </div>

      <footer class="composer">
        <div class="input">
          <svg class="smile" viewBox="2 2 20 20" width="56" height="56"><circle cx="12" cy="12" r="9" fill="none" stroke="#8b9499" stroke-width="2" /><circle cx="8.500" cy="9.500" r="1.550" fill="#8b9499" /><circle cx="15.500" cy="9.500" r="1.550" fill="#8b9499" /><path d="M7.300 14.200Q7.300 13.800 7.900 13.800H16.100Q16.700 13.800 16.600 14.300Q15.400 17.200 12 17.200T7.300 14.200Z" fill="#8b9499" /></svg>
          <span class="placeholder">Message</span>
          <svg class="clip" viewBox="0 0 36 56" width="36" height="56"><path d="M33 14V37.500Q33 53.200 18 53.200T2.800 37.500V14Q2.800 2.700 13.500 2.700T24 14V35.500Q24 41.500 18 41.500T12.500 35.500V14" fill="none" stroke="#8b9499" stroke-width="5" stroke-linecap="round" stroke-linejoin="round" /></svg>
          <svg class="camera" viewBox="0 0 56 50" width="56" height="50"><path d="M5 8.500H16L21 2.700H35L40 8.500H51Q53.300 8.500 53.300 11V45Q53.300 47.300 51 47.300H5Q2.700 47.300 2.700 45V11Q2.700 8.500 5 8.500Z" fill="none" stroke="#8b9499" stroke-width="5.200" stroke-linejoin="round" /><circle cx="28" cy="27.500" r="10.200" fill="none" stroke="#8b9499" stroke-width="5.200" /></svg>
        </div>
        <div class="record">
          <svg viewBox="0 0 38 53" width="38" height="53"><rect x="10.500" y="0" width="17" height="34" rx="8.500" fill="#0b1216" /><path d="M2.500 27.500C4 37 10 42 19 42S34 37 35.500 27.500M19 42V50.500" fill="none" stroke="#0b1216" stroke-width="5.200" stroke-linecap="round" /></svg>
        </div>
      </footer>
      <i class="scrollbar" />
    </main>

    <div class="navbar">
      <i class="square" />
      <i class="home" />
      <svg class="tri" viewBox="0 0 37 46" width="37" height="46"><path d="M33 2.500L3 22Q1.500 23 3 24L33 43.500Q35.500 44.500 35.500 42V4Q35.500 1.500 33 2.500Z" fill="#999" stroke="#999" stroke-width="2" /></svg>
    </div>
  </div>
</template>

<style>
html, body { margin: 0; background: #000; }
</style>

<style scoped>
.phone { width: 1080px; height: 2400px; display: flex; flex-direction: column; background: #0b141a; font-family: Roboto, "Noto Sans", sans-serif; overflow: hidden; }
.phone svg { display: block; flex: none; }
.defs { position: absolute; }

.status { height: 113px; display: flex; box-sizing: border-box; padding: 34px 69px 0 55px; align-items: flex-start; color: #e4e7e9; }
.clock { font-size: 37.5px; line-height: 45px; font-weight: 500; margin-right: auto; letter-spacing: -.3px; }
.speed { display: flex; flex-direction: column; font-size: 21px; font-weight: 700; line-height: 19px; padding-top: 5px; margin-right: 11px; }
.speed span:last-child { font-size: 18.5px; }
.bell { margin: 3px 13px 0 0; }
.network { position: relative; width: 68px; height: 36px; margin: 2px 12px 0 0; }
.hplus { position: absolute; left: 3px; top: -2px; font-size: 20px; line-height: 22px; font-weight: 700; }
.battery { display: flex; align-items: center; padding-top: 6px; gap: 1px; }
.cell { width: 63px; height: 30px; box-sizing: border-box; border: 3px solid #e4e7e9; border-radius: 9px; padding: 3px 4px; display: flex; align-items: center; }
.charge { width: 14px; height: 18px; background: #4b5156; border-radius: 4px 0 0 4px; }
.cell b { font-size: 23px; line-height: 24px; font-weight: 500; margin-left: -3px; padding-top: 2px; }
.nub { width: 4px; height: 10px; border-radius: 2px; background: #e4e7e9; }

.topbar { height: 124px; display: flex; align-items: flex-start; border-bottom: 1px solid #1f272d; box-sizing: border-box; }
.back { margin: 26px 11px 0 23px; }
.topbar h1 { margin: 17px auto 0 24px; font-size: 49.5px; line-height: 60px; font-weight: 400; color: #f7f8fa; letter-spacing: .2px; }
.video { margin-top: 26px; margin-right: 79px; }
.call { margin-top: 23px; margin-right: 85px; }
.more { margin-top: 25px; margin-right: 55px; }

.pinned { height: 136px; box-sizing: border-box; border-bottom: 3px solid #262d33; display: flex; align-items: center; padding: 0 0 0 22px; flex: none; }
.steps { display: flex; flex-direction: column; gap: 5px; margin-right: 23px; }
.steps i { width: 5px; height: 19px; border-radius: 2px; background: #3b4851; }
.steps .on { background: #25c067; }
.pinbox { width: 77px; height: 77px; border-radius: 20px; background: #232a2f; display: flex; align-items: center; justify-content: center; }
.minimic { margin: 2px 18px 0 29px; }
.pintext { font-size: 38.5px; line-height: 46px; color: #f2f5f6; letter-spacing: .9px; padding-top: 4px; }

.chat { position: relative; height: 1897px; flex: none; background: #0f0b17; overflow: hidden; display: flex; flex-direction: column; }
.wallpaper { position: absolute; left: 0; top: 0; }
.line { fill: none; stroke: #26222d; stroke-width: 2.8px; vector-effect: non-scaling-stroke; stroke-linecap: round; stroke-linejoin: round; }
.dot { fill: #26222d; }

.messages { position: relative; display: flex; flex-direction: column; align-items: flex-start; height: 1758px; padding: 0 47px; flex: none; }
.bubble { position: relative; box-sizing: border-box; flex: none; display: flex; flex-direction: column; border-radius: 33px; background: #202b33; color: #f7f8fa; }
.out { align-self: flex-end; background: #144d37; }
.in.tailed { border-top-left-radius: 0; }
.out.tailed { border-top-right-radius: 0; }
.tail { position: absolute; top: 0; left: -20px; fill: #202b33; }
.out .tail { left: auto; right: -20px; transform: scaleX(-1); fill: #144d37; }

.body { flex: 1; display: flex; justify-content: space-between; align-items: flex-start; padding: 0 23px 9px 27px; }
.out .body { padding-right: 24px; }
.stack .body { flex-direction: column; }
.content { display: flex; align-items: flex-start; }
.text { font-size: 44px; line-height: 52px; white-space: nowrap; padding-top: 16px; }
.m2 .text { padding-top: 17px; }
.stack .content { height: 60px; }
.meta { display: flex; align-items: center; gap: 12px; align-self: flex-end; height: 40px; }
.meta time { font-size: 33px; line-height: 40px; color: #8a9398; white-space: nowrap; letter-spacing: .2px; }
.out .meta { margin-bottom: 1px; }
.out .meta time { color: #86a694; }
.ticks { margin-top: -3px; }
.emojis { display: flex; }

.quote { box-sizing: border-box; height: 132px; margin: 10px 10px 0; padding: 19px 0 0 33px; border-radius: 22px; background: linear-gradient(90deg, #a792fd 11px, #154232 11px); flex: none; }
.quote b { display: block; font-size: 38px; line-height: 46px; font-weight: 500; color: #8b7ccb; }
.quote p { margin: 7px 0 0; font-size: 39px; line-height: 46px; color: #84a093; display: flex; white-space: nowrap; letter-spacing: .1px; }
.quote.mine { background: linear-gradient(90deg, #25c265 11px, #1e272f 11px); }
.mine b { color: #25995a; }
.mine p { color: #848c91; }
.smallmoji { width: 42px; height: 42px; margin: 2px 3px 0 0; }
.mine span { margin-right: 10px; }

.m1 { width: 540px; height: 90px; margin-top: -23px; }
.m2 { width: 849px; height: 137px; margin-top: 27px; }
.m3 { width: 325px; height: 152px; margin-top: 15px; }
.m4 { width: 783px; height: 284px; margin-top: 29px; }
.m5 { width: 594px; height: 90px; margin-top: 14px; }
.m6 { width: 788px; height: 111px; margin-top: 6px; }
.m7 { width: 825px; height: 301px; margin-top: 29px; }
.m8 { width: 325px; height: 152px; margin-top: 7px; }
.m9 { width: 409px; height: 90px; margin-top: 15px; }
.m10 { width: 410px; height: 90px; margin-top: 14px; }
.m11 { width: 300px; height: 90px; margin-top: 14px; }

.m3 .emoji, .m8 .emoji { width: 91px; height: 91px; margin: 30px 0 0 2px; }
.m4 .emojis { gap: 6px; padding: 29px 0 0 2px; }
.m4 .emoji { width: 80px; height: 80px; }
.m6 .emojis { gap: 4px; padding: 23px 0 0 1px; }
.m6 .emoji { width: 61px; height: 61px; }
.m7 .emoji { width: 61px; height: 61px; margin: 24px 14px 0 1px; }
.m7 .text { padding-top: 28px; letter-spacing: .05px; }
.m9 .meta, .m10 .meta, .m11 .meta { margin-bottom: 1px; }

.composer { position: relative; display: flex; align-items: center; height: 129px; padding: 0 12px 0 13px; margin-top: -2px; }
.input { width: 913px; height: 126px; box-sizing: border-box; border-radius: 63px; background: #202b33; display: flex; align-items: center; padding: 0 38px 0 32px; margin-right: 13px; }
.placeholder { font-size: 49.5px; line-height: 58px; color: #8b9499; margin: 3px auto 0 32px; letter-spacing: .2px; }
.clip { margin-right: 75px; }
.record { width: 129px; height: 129px; border-radius: 50%; background: #23c265; display: flex; align-items: center; justify-content: center; box-shadow: 0 2px 6px rgba(0, 0, 0, .4); }
.scrollbar { position: absolute; right: 0; top: 1407px; width: 11px; height: 340px; background: rgba(143, 155, 158, .5); }

.navbar { flex: 1; background: #000; display: flex; align-items: center; padding-left: 287px; }
.square { width: 39px; height: 39px; border-radius: 6px; background: #999; margin-right: 187px; }
.home { width: 53px; height: 53px; box-sizing: border-box; border-radius: 50%; border: 4px solid #999; background: radial-gradient(circle, #999 14.5px, #000 15.5px); margin-right: 187px; }
</style>
